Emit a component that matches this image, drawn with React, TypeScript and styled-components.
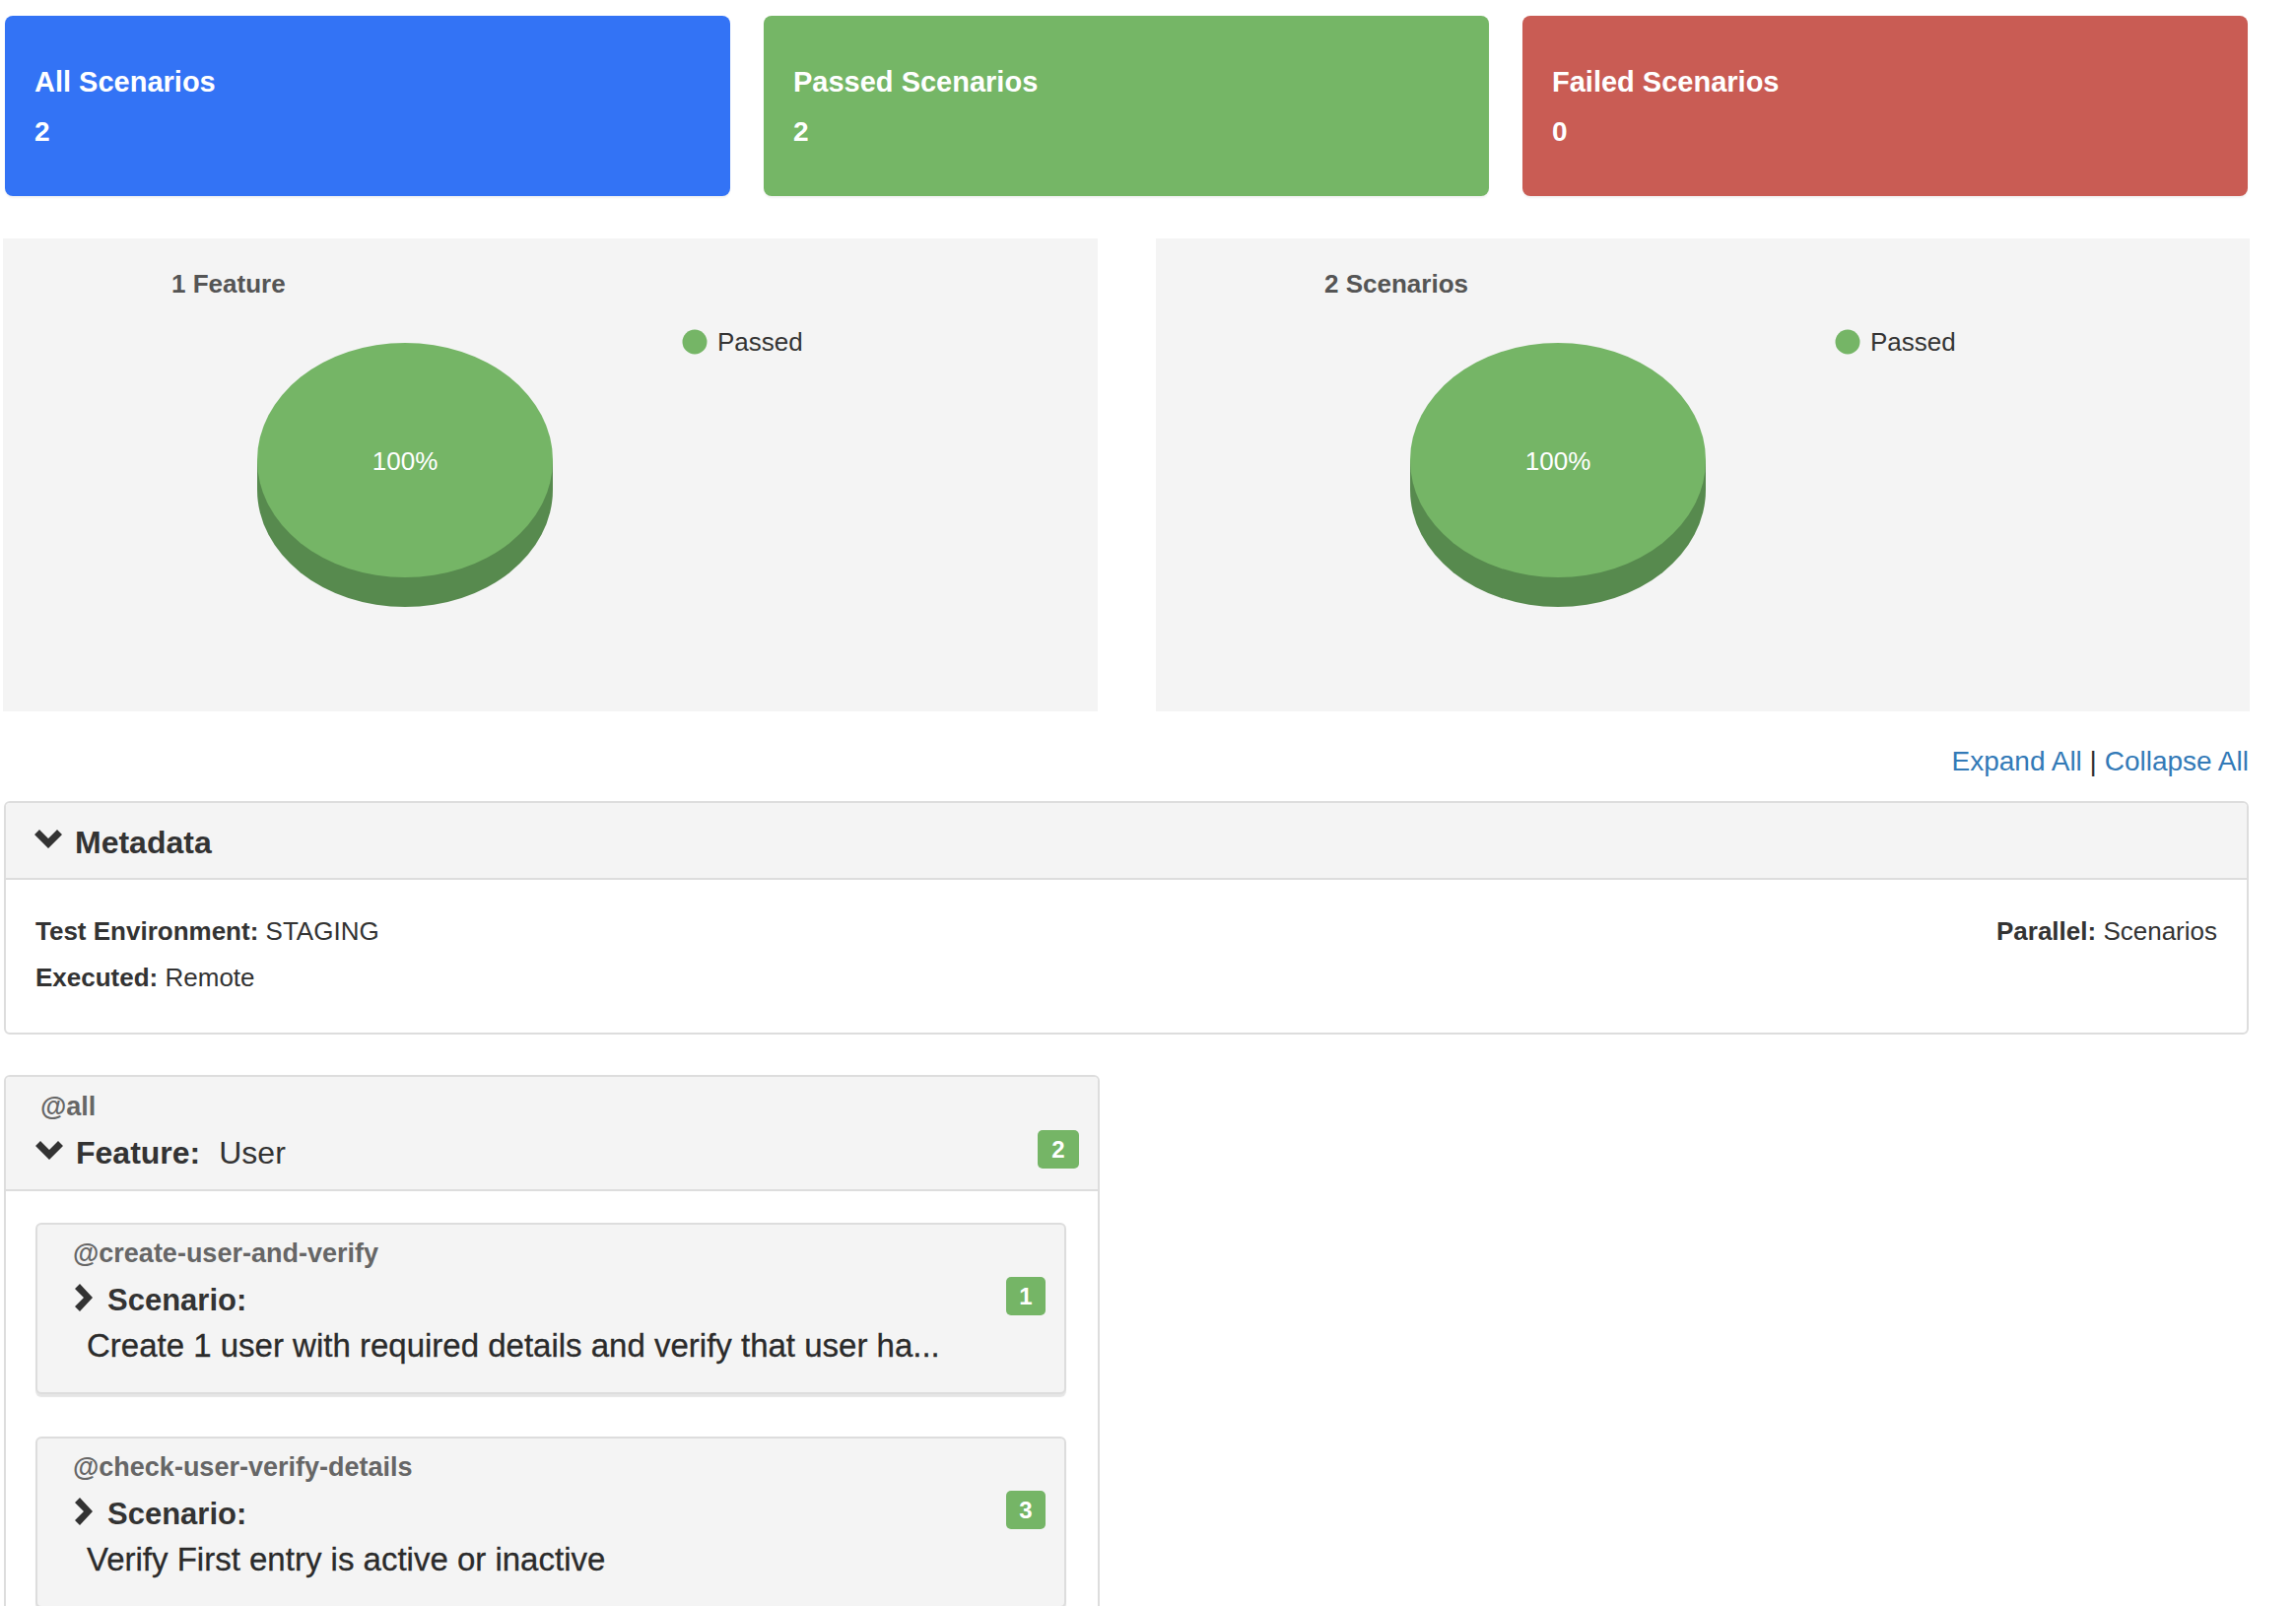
import React from "react";
import styled, { createGlobalStyle } from "styled-components";

const GlobalStyle = createGlobalStyle`
  html, body {
    margin: 0;
    padding: 0;
    background: #ffffff;
  }
  body {
    font-family: "Liberation Sans", Arial, Helvetica, sans-serif;
    color: #333333;
  }
`;

const Page = styled.div`
  width: 2278px;
  margin-left: 4px;
  padding-top: 16px;
  padding-bottom: 40px;
`;

const StatsRow = styled.div`
  display: grid;
  grid-template-columns: repeat(3, 1fr);
  gap: 34px;
  padding: 0 1px;
`;

const StatCard = styled.div<{ $bg: string }>`
  background: ${(p) => p.$bg};
  color: #ffffff;
  border-radius: 8px;
  padding: 49px 30px 47px;
  box-shadow: 0 2px 2px rgba(0, 0, 0, 0.05);
`;

const StatTitle = styled.div`
  font-size: 29px;
  font-weight: 700;
  line-height: 36px;
`;

const StatValue = styled.div`
  margin-top: 15px;
  font-size: 28px;
  font-weight: 700;
  line-height: 36px;
`;

const ChartsRow = styled.div`
  margin: 43px -1px 0;
  display: grid;
  grid-template-columns: 1fr 1fr;
  gap: 59px;
`;

const ChartPanel = styled.div`
  background: #f4f4f4;
  height: 480px;
  overflow: hidden;
`;

const ToggleLinks = styled.div`
  margin-top: 32px;
  text-align: right;
  font-size: 28px;
  line-height: 38px;
  color: #333333;
`;

const LinkText = styled.a`
  color: #337ab7;
  text-decoration: none;
  cursor: pointer;
`;

const Panel = styled.div`
  border: 2px solid #dddddd;
  border-radius: 6px;
  background: #ffffff;
  overflow: hidden;
`;

const MetaPanel = styled(Panel)`
  margin-top: 21px;
`;

const MetaHeader = styled.div`
  background: #f4f4f4;
  border-bottom: 2px solid #dddddd;
  padding: 22px 29px 18px;
  display: flex;
  align-items: flex-start;
  gap: 13px;
`;

const HeaderTitle = styled.div`
  font-size: 32px;
  font-weight: 700;
  line-height: 36px;
  color: #333333;
`;

const MetaBody = styled.div`
  padding: 34px 30px 38px;
  display: flex;
  justify-content: space-between;
  align-items: flex-start;
`;

const MetaColumn = styled.div`
  display: flex;
  flex-direction: column;
  gap: 11px;
`;

const MetaLine = styled.div`
  font-size: 26px;
  line-height: 36px;
  color: #333333;
`;

const MetaLabel = styled.b`
  font-weight: 700;
`;

const FeaturePanel = styled(Panel)`
  margin-top: 41px;
  width: 1108px;
`;

const FeatureHeader = styled.div`
  background: #f4f4f4;
  border-bottom: 2px solid #dddddd;
  padding: 15px 19px 17px 30px;
`;

const Tag = styled.div<{ $indent: number }>`
  font-size: 27px;
  font-weight: 700;
  line-height: 30px;
  color: #666666;
  padding-left: ${(p) => p.$indent}px;
`;

const TitleRow = styled.div<{ $gap: number; $top: number }>`
  display: flex;
  align-items: flex-start;
  gap: ${(p) => p.$gap}px;
  margin-top: ${(p) => p.$top}px;
`;

const IconSlot = styled.span<{ $top: number; $left?: number }>`
  display: inline-flex;
  margin-top: ${(p) => p.$top}px;
  margin-left: ${(p) => p.$left ?? 0}px;
`;

const FeatureTitle = styled.div`
  font-size: 32px;
  line-height: 40px;
  color: #333333;
  white-space: pre;
`;

const Keyword = styled.span`
  font-weight: 700;
`;

const Name = styled.span`
  margin-left: 19px;
`;

const Badge = styled.span<{ $w: number; $top: number }>`
  margin-left: auto;
  margin-top: ${(p) => p.$top}px;
  width: ${(p) => p.$w}px;
  height: 39px;
  border-radius: 5px;
  background: #75b566;
  color: #ffffff;
  font-size: 24px;
  font-weight: 700;
  display: flex;
  align-items: center;
  justify-content: center;
`;

const FeatureBody = styled.div`
  padding: 32px 32px 32px 30px;
  display: flex;
  flex-direction: column;
  gap: 43px;
`;

const ScenarioCard = styled.div`
  background: #f4f4f4;
  border: 2px solid #dddddd;
  border-radius: 6px;
  padding: 14px 19px 27px 36px;
  box-shadow: 0 3px 1px rgba(0, 0, 0, 0.1);
`;

const ScenarioTitle = styled.div`
  font-size: 31px;
  font-weight: 700;
  line-height: 40px;
  color: #333333;
`;

const ScenarioDesc = styled.div`
  margin-top: 6px;
  padding-left: 14px;
  font-size: 33px;
  line-height: 40px;
  color: #2b2b2b;
  white-space: nowrap;
  -webkit-text-stroke: 0.3px #2b2b2b;
`;

const ChevronDown = () => (
  <svg width="28" height="19" viewBox="0 0 28 19">
    <polygon points="0,5 5,0 14,9 23,0 28,5 14,19" fill="#333333" />
  </svg>
);

const ChevronRight = () => (
  <svg width="18" height="28" viewBox="0 0 18 28">
    <polygon points="5,0 18,14 5,28 0,23 9,14 0,5" fill="#333333" />
  </svg>
);

const PieChart = ({ title }: { title: string }) => (
  <svg width="1112" height="480" viewBox="0 0 1112 480">
    <text
      x="171"
      y="55"
      fontFamily="Liberation Sans, Arial, sans-serif"
      fontSize="26"
      fontWeight="700"
      fill="#555555"
    >
      {title}
    </text>
    <path d="M258,225 L258,255 A150,119 0 0 0 558,255 L558,225 Z" fill="#578a4e" />
    <ellipse cx="408" cy="225" rx="150" ry="119" fill="#75b566" />
    <text
      x="408"
      y="235"
      textAnchor="middle"
      fontFamily="Liberation Sans, Arial, sans-serif"
      fontSize="26"
      fill="#ffffff"
    >
      100%
    </text>
    <circle cx="702" cy="105" r="12.5" fill="#75b566" />
    <text
      x="725"
      y="114"
      fontFamily="Liberation Sans, Arial, sans-serif"
      fontSize="26"
      fill="#333333"
    >
      Passed
    </text>
  </svg>
);

const scenarios = [
  {
    tag: "@create-user-and-verify",
    badge: "1",
    desc: "Create 1 user with required details and verify that user ha...",
  },
  {
    tag: "@check-user-verify-details",
    badge: "3",
    desc: "Verify First entry is active or inactive",
  },
];

export default function App() {
  return (
    <>
      <GlobalStyle />
      <Page>
        <StatsRow>
          <StatCard $bg="#3373f5">
            <StatTitle>All Scenarios</StatTitle>
            <StatValue>2</StatValue>
          </StatCard>
          <StatCard $bg="#75b666">
            <StatTitle>Passed Scenarios</StatTitle>
            <StatValue>2</StatValue>
          </StatCard>
          <StatCard $bg="#c95c54">
            <StatTitle>Failed Scenarios</StatTitle>
            <StatValue>0</StatValue>
          </StatCard>
        </StatsRow>

        <ChartsRow>
          <ChartPanel>
            <PieChart title="1 Feature" />
          </ChartPanel>
          <ChartPanel>
            <PieChart title="2 Scenarios" />
          </ChartPanel>
        </ChartsRow>

        <ToggleLinks>
          <LinkText>Expand All</LinkText> | <LinkText>Collapse All</LinkText>
        </ToggleLinks>

        <MetaPanel>
          <MetaHeader>
            <IconSlot $top={5}>
              <ChevronDown />
            </IconSlot>
            <HeaderTitle>Metadata</HeaderTitle>
          </MetaHeader>
          <MetaBody>
            <MetaColumn>
              <MetaLine>
                <MetaLabel>Test Environment:</MetaLabel> STAGING
              </MetaLine>
              <MetaLine>
                <MetaLabel>Executed:</MetaLabel> Remote
              </MetaLine>
            </MetaColumn>
            <MetaColumn>
              <MetaLine>
                <MetaLabel>Parallel:</MetaLabel> Scenarios
              </MetaLine>
            </MetaColumn>
          </MetaBody>
        </MetaPanel>

        <FeaturePanel>
          <FeatureHeader>
            <Tag $indent={5}>@all</Tag>
            <TitleRow $gap={13} $top={12}>
              <IconSlot $top={8}>
                <ChevronDown />
              </IconSlot>
              <FeatureTitle>
                <Keyword>Feature:</Keyword>
                <Name>User</Name>
              </FeatureTitle>
              <Badge $w={42} $top={-3}>
                2
              </Badge>
            </TitleRow>
          </FeatureHeader>
          <FeatureBody>
            {scenarios.map((s) => (
              <ScenarioCard key={s.tag}>
                <Tag $indent={0}>{s.tag}</Tag>
                <TitleRow $gap={15} $top={13}>
                  <IconSlot $top={3} $left={2}>
                    <ChevronRight />
                  </IconSlot>
                  <ScenarioTitle>Scenario:</ScenarioTitle>
                  <Badge $w={40} $top={-4}>
                    {s.badge}
                  </Badge>
                </TitleRow>
                <ScenarioDesc>{s.desc}</ScenarioDesc>
              </ScenarioCard>
            ))}
          </FeatureBody>
        </FeaturePanel>
      </Page>
    </>
  );
}
